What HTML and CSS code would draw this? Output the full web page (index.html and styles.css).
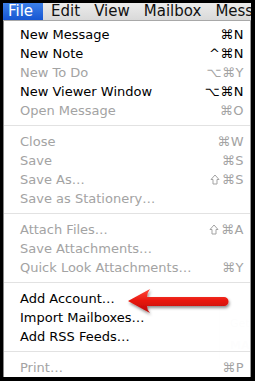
FILE: index.html
```html
<!DOCTYPE html>
<html lang="en">
<head>
  <meta charset="UTF-8" />
  <title>Mail – File menu</title>
  <link rel="stylesheet" href="styles.css">
</head>
<body>
  <div class="frame">
    <div class="menubar">
      <span class="menubar-item active">File</span>
      <span class="menubar-item">Edit</span>
      <span class="menubar-item">View</span>
      <span class="menubar-item">Mailbox</span>
      <span class="menubar-item">Message</span>
    </div>

    <div class="ghost">
      <span class="ghost-get">Get</span>
      <span class="ghost-mai">MA</span>
    </div>

    <div class="menu">
      <div class="item"><span>New Message</span><span class="key">⌘N</span></div>
      <div class="item"><span>New Note</span><span class="key">^⌘N</span></div>
      <div class="item off"><span>New To Do</span><span class="key">⌥⌘Y</span></div>
      <div class="item"><span>New Viewer Window</span><span class="key">⌥⌘N</span></div>
      <div class="item off"><span>Open Message</span><span class="key">⌘O</span></div>
      <div class="sep"></div>
      <div class="item off"><span>Close</span><span class="key">⌘W</span></div>
      <div class="item off"><span>Save</span><span class="key">⌘S</span></div>
      <div class="item off"><span>Save As…</span><span class="key"><svg class="shift" width="10" height="11" viewBox="0 0 10 11"><path d="M5 1 L9 5.5 L7 5.5 L7 10 L3 10 L3 5.5 L1 5.5 Z" fill="none" stroke="currentColor" stroke-width="1"/></svg>⌘S</span></div>
      <div class="item off"><span>Save as Stationery…</span></div>
      <div class="sep"></div>
      <div class="item off"><span>Attach Files…</span><span class="key"><svg class="shift" width="10" height="11" viewBox="0 0 10 11"><path d="M5 1 L9 5.5 L7 5.5 L7 10 L3 10 L3 5.5 L1 5.5 Z" fill="none" stroke="currentColor" stroke-width="1"/></svg>⌘A</span></div>
      <div class="item off"><span>Save Attachments…</span></div>
      <div class="item off"><span>Quick Look Attachments…</span><span class="key">⌘Y</span></div>
      <div class="sep"></div>
      <div class="item"><span>Add Account…</span></div>
      <div class="item"><span>Import Mailboxes…</span></div>
      <div class="item"><span>Add RSS Feeds…</span></div>
      <div class="sep"></div>
      <div class="item off"><span>Print…</span><span class="key">⌘P</span></div>
    </div>

    <svg class="arrow" width="112" height="36" viewBox="0 0 112 36">
      <defs>
        <linearGradient id="red" x1="0" y1="0" x2="0" y2="1">
          <stop offset="0" stop-color="#ff4a3c"/>
          <stop offset="0.5" stop-color="#e8160f"/>
          <stop offset="1" stop-color="#b80a08"/>
        </linearGradient>
        <filter id="shadow" x="-10%" y="-30%" width="130%" height="180%">
          <feDropShadow dx="1" dy="2" stdDeviation="1.4" flood-color="#000" flood-opacity="0.45"/>
        </filter>
      </defs>
      <path d="M5 18 L27 6 Q24 10 24 14 L101 14 A4.5 4.5 0 0 1 101 23 L24 23 Q24 27 27 30 Z"
            fill="url(#red)" filter="url(#shadow)"/>
    </svg>
  </div>
</body>
</html>
```

FILE: styles.css
```css
body {
  margin: 0;
  background: #000;
  font-family: "DejaVu Sans", "Liberation Sans", sans-serif;
}
.frame {
  position: relative;
  width: 248px;
  height: 374px;
  margin: 3px 4px 4px 3px;
  background: #fff;
  overflow: hidden;
}
.menubar {
  display: flex;
  height: 17px;
  background: linear-gradient(#ececec, #d9d9d9);
  border-bottom: 1px solid #a8a8a8;
  font-size: 15px;
  line-height: 17px;
  white-space: nowrap;
  overflow: hidden;
}
.menubar-item {
  padding: 0 6px 0 8px;
  color: #111;
}
.menubar-item.active {
  padding: 0 10px 0 5px;
  margin-right: 0;
  background: linear-gradient(#3d80e8, #1656d2);
  color: #fff;
}
.menu {
  position: relative;
  padding-top: 4px;
  border-left: 1px solid #8a8a8a;
  border-right: 1px solid #9a9a9a;
  background: rgba(255, 255, 255, 0.9);
  font-size: 13px;
}
.item {
  display: flex;
  justify-content: space-between;
  height: 19px;
  line-height: 19px;
  padding: 0 6px 0 16px;
  color: #000;
  white-space: nowrap;
}
.item.off {
  color: #a3a3a3;
}
.key {
  display: flex;
  align-items: center;
  letter-spacing: 0.5px;
}
.shift {
  margin-right: 2px;
}
.sep {
  height: 12px;
  background: linear-gradient(transparent 5px, #e2e2e2 5px, #e2e2e2 6px, transparent 6px);
}
.ghost {
  position: absolute;
  left: 216px;
  top: 286px;
  width: 31px;
  height: 70px;
  border-left: 1px solid #eeeeee;
  font-size: 11px;
  color: #e6e6e6;
}
.ghost-get {
  position: absolute;
  left: 10px;
  top: 28px;
}
.ghost-mai {
  position: absolute;
  left: 10px;
  top: 50px;
  font-weight: bold;
}
.arrow {
  position: absolute;
  left: 120px;
  top: 280px;
}
```
